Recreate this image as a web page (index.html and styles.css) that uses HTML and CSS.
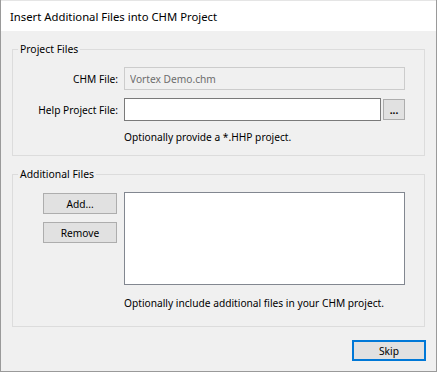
FILE: index.html
```html
<!DOCTYPE html>
<html lang="en">
<head>
    <meta charset="UTF-8">
    <title>Insert Additional Files into CHM Project</title>
    <link rel="stylesheet" href="styles.css">
</head>
<body>
    <div class="window">
        <div class="titlebar">Insert Additional Files into CHM Project</div>
        <div class="content">
            <fieldset class="group">
                <legend>Project Files</legend>
                <div class="form-grid">
                    <label for="chm" class="label">CHM File:</label>
                    <input type="text" id="chm" class="field disabled" value="Vortex Demo.chm" disabled>

                    <label for="hhp" class="label">Help Project File:</label>
                    <div class="browse-row">
                        <input type="text" id="hhp" class="field">
                        <button class="btn browse">...</button>
                    </div>

                    <span></span>
                    <p class="hint">Optionally provide a *.HHP project.</p>
                </div>
            </fieldset>

            <fieldset class="group group-files">
                <legend>Additional Files</legend>
                <div class="form-grid">
                    <div class="side-buttons">
                        <button class="btn side">Add...</button>
                        <button class="btn side">Remove</button>
                    </div>
                    <div class="listbox"></div>

                    <span></span>
                    <p class="hint">Optionally include additional files in your CHM project.</p>
                </div>
            </fieldset>

            <div class="footer">
                <button class="btn primary">Skip</button>
            </div>
        </div>
    </div>
</body>
</html>
```

FILE: styles.css
```css
* {
    box-sizing: border-box;
}

body {
    margin: 0;
    font-family: 'Noto Sans', 'Segoe UI', sans-serif;
    font-size: 10.2px;
    color: #000;
    background-color: #fff;
}

.window {
    width: 437px;
    height: 372px;
    border: 1px solid #9a9a9a;
    border-top: none;
    background-color: #f0f0f0;
}

.titlebar {
    height: 31px;
    padding-left: 9px;
    line-height: 31px;
    font-size: 11.3px;
    background-color: #fff;
    border-top: 1px solid #e5e5e5;
}

.content {
    padding: 0 11px 0 11px;
}

.group {
    margin: 10px 0 0 0;
    padding: 0 0 10px 0;
    border: 1px solid #dcdcdc;
    min-width: 0;
}

.group legend {
    margin-left: 5px;
    padding: 0 2px;
    line-height: 16px;
    font-size: 10.4px;
}

.form-grid {
    display: grid;
    grid-template-columns: 105px 281px;
    column-gap: 6px;
    row-gap: 8px;
    padding-top: 10px;
    align-items: center;
}

.label {
    text-align: right;
}

.field {
    height: 23px;
    padding: 0 5px;
    font: inherit;
    color: #000;
    background-color: #fff;
    border: 1px solid #7a7a7a;
    border-radius: 0;
    outline: none;
}

.field.disabled {
    color: #6d6d6d;
    background-color: #f0f0f0;
    border-color: #cccccc;
}

.browse-row {
    display: flex;
    align-items: center;
    gap: 2px;
}

.browse-row .field {
    flex: 1;
    min-width: 0;
}

.btn {
    font: inherit;
    color: #000;
    background-color: #e1e1e1;
    border: 1px solid #adadad;
    border-radius: 0;
    padding: 0;
}

.browse {
    width: 22px;
    height: 21px;
    font-weight: bold;
    line-height: 14px;
}

.hint {
    margin: 0;
    line-height: 16px;
    white-space: nowrap;
}

.group-files .form-grid {
    align-items: start;
    row-gap: 10px;
}

.group-files {
    padding-bottom: 15px;
}

.side-buttons {
    display: flex;
    flex-direction: column;
    align-items: flex-end;
    gap: 8px;
    padding-top: 1px;
    padding-right: 1px;
}

.side {
    width: 74px;
    height: 21px;
}

.listbox {
    height: 93px;
    background-color: #fff;
    border: 1px solid #828790;
}

.footer {
    display: flex;
    justify-content: flex-end;
    margin-top: 13px;
}

.primary {
    width: 74px;
    height: 21px;
    border: 2px solid #0078d7;
    margin-right: -1px;
}
```
